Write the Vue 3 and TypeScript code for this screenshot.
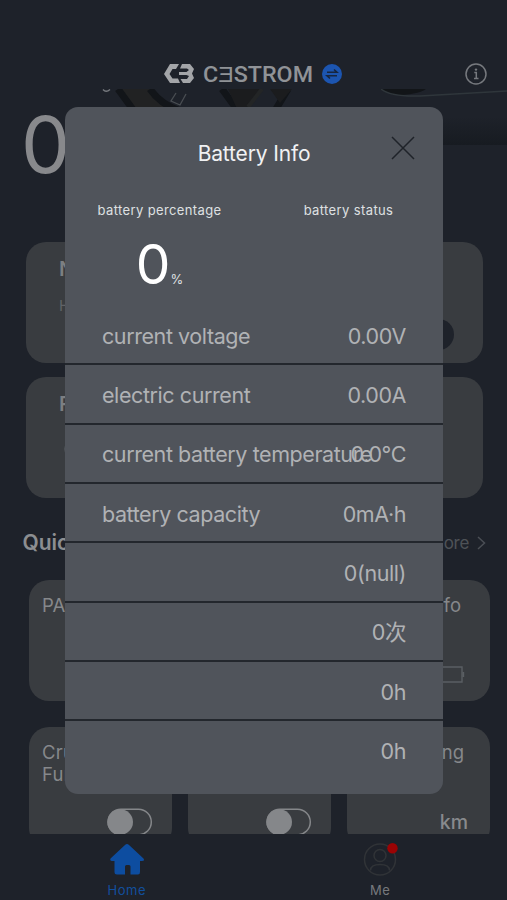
<script setup lang="ts">
interface Reading {
  label: string
  value: string
}

interface Tile {
  title: string
  kind: 'plain' | 'toggle' | 'battery' | 'distance'
}

const readings: Reading[] = [
  { label: 'current voltage', value: '0.00V' },
  { label: 'electric current', value: '0.00A' },
  { label: 'current battery temperature', value: '0.0°C' },
  { label: 'battery capacity', value: '0mA·h' },
  { label: '', value: '0(null)' },
  { label: '', value: '0次' },
  { label: '', value: '0h' },
  { label: '', value: '0h' },
]

const tiles: Tile[] = [
  { title: 'PAS', kind: 'plain' },
  { title: '', kind: 'plain' },
  { title: 'Info', kind: 'battery' },
  { title: 'Cruise Function', kind: 'toggle' },
  { title: '', kind: 'toggle' },
  { title: 'Riding', kind: 'distance' },
]
</script>

<template>
  <div class="screen">
    <header class="top">
      <svg class="mark" viewBox="0 0 30 20" width="30" height="20">
        <path d="M6 0H15L12 5H8.500L5.500 10L8.500 14.500H14L16 19H6L0 10Z" />
        <path d="M18 0H26L30 5L28 9.500L30 14L26 19H19L16.500 15H23L25 12L22.500 11H15V8H22.500L25 6L23 4.500H16Z" />
      </svg>
      <svg class="wordmark" viewBox="0 0 112 26" width="112" height="26">
        <text x="0" y="21" textLength="110" lengthAdjust="spacingAndGlyphs">CƎSTROM</text>
      </svg>
      <svg class="swap" viewBox="0 0 20 20" width="20" height="20">
        <circle cx="10" cy="10" r="10" fill="#1c55b0" />
        <path d="M5 8.300H15L12 5.500M15 11.700H5L8 14.500" fill="none" stroke="#17263f" stroke-width="1.600" />
      </svg>
      <svg class="about" viewBox="0 0 22 22" width="22" height="22">
        <circle cx="11" cy="11" r="10" fill="none" stroke="#76797e" stroke-width="1.500" />
        <circle cx="11" cy="6.600" r="1.200" fill="#76797e" />
        <path d="M9.300 9.500H11.300V15.500M9 15.500H13.500" fill="none" stroke="#76797e" stroke-width="1.500" />
      </svg>
    </header>

    <main class="content">
      <section class="hero">
        <svg class="bike" viewBox="0 0 507 80" width="507" height="80">
          <defs>
            <linearGradient id="ground" x1="0" y1="0" x2="0" y2="1">
              <stop offset="0" stop-color="#1e222a" />
              <stop offset="1" stop-color="#171b21" />
            </linearGradient>
          </defs>
          <rect x="440" y="28" width="67" height="28" fill="url(#ground)" />
          <path d="M118 0H152L178 22H134Z" fill="#212223" />
          <path d="M118 0L134 22M150 0Q160 15 180 22M222 0L238 22M288 0L276 20" fill="none" stroke="#121519" stroke-width="7" />
          <path d="M228 0H262L246 22H238Z M270 0H292L280 14Z" fill="#1b1c1e" />
          <path d="M262 0L248 18" stroke="#232526" stroke-width="4" />
          <path d="M176 4L171 12L180 16L186 5" fill="none" stroke="#4a4e53" stroke-width="1.300" />
          <path d="M380 0H426Q417 6 394 6Z" fill="#121518" />
          <path d="M381 0Q391 8 420 7L507 2" fill="none" stroke="#2f363b" stroke-width="1.500" />
          <path d="M103 .5Q106 4 110 .5" fill="none" stroke="#777a7f" stroke-width="1.400" />
        </svg>
        <span class="speed">0</span>
      </section>

      <section class="panel">
        <strong>N</strong>
        <small>H</small>
        <i class="knob"></i>
      </section>
      <section class="panel">
        <strong>R</strong>
        <svg class="dial" viewBox="0 0 20 20" width="20" height="20">
          <circle cx="10" cy="10" r="9" fill="none" stroke="#55595e" stroke-width="1.500" />
        </svg>
      </section>

      <div class="heading">
        <h2>Quick</h2>
        <span class="more">More
          <svg viewBox="0 0 9 14" width="9" height="14"><path d="M1 1L7.500 7L1 13" fill="none" stroke="#4b4f55" stroke-width="1.500" /></svg>
        </span>
      </div>

      <section class="tiles">
        <article v-for="(tile, i) in tiles" :key="i" class="tile" :class="tile.kind">
          <span class="title">{{ tile.title }}</span>
          <svg v-if="tile.kind === 'toggle'" class="toggle-icon" viewBox="0 0 46 28" width="46" height="28">
            <rect x="1" y="1.200" width="43.300" height="25.600" rx="12.800" fill="none" stroke="#85878a" stroke-width="1.500" />
            <circle cx="13.200" cy="14" r="12.800" fill="#85878a" />
          </svg>
          <svg v-else-if="tile.kind === 'battery'" class="cell" viewBox="0 0 36 17" width="36" height="17">
            <path d="M1 1H33V16H1ZM34.500 6V11" fill="none" stroke="#5a5e63" stroke-width="1.400" />
          </svg>
          <span v-else-if="tile.kind === 'distance'" class="unit">km</span>
        </article>
      </section>
    </main>

    <nav class="tabs">
      <a class="tab active">
        <svg viewBox="0 0 36 34" width="36" height="34">
          <path d="M18 1Q19 1 20 2L34.500 15.500Q36 18 33 18H31V29Q31 31.500 29 31.500H21.500V23.500Q21.500 22 20 22H17.500Q16 22 16 23.500V31.500H8Q5.500 31.500 5.500 29V18H3Q.5 17.500 1.500 15.500L16 2Q17 1 18 1Z" fill="#0d4da0" />
        </svg>
        <span>Home</span>
      </a>
      <a class="tab">
        <svg viewBox="0 0 36 34" width="36" height="34">
          <g fill="none" stroke="#303337" stroke-width="1.500">
            <circle cx="18" cy="16.500" r="15.500" />
            <circle cx="18" cy="12.500" r="6" />
            <path d="M8.500 27.500Q8.500 21.500 18 21.500T27.500 27.500" />
          </g>
          <circle cx="30.500" cy="5.200" r="5.200" fill="#9b0304" />
        </svg>
        <span>Me</span>
      </a>
    </nav>

    <div class="dialog">
      <div class="dialog-head">
        <h1>Battery Info</h1>
        <svg class="close" viewBox="0 0 24 24" width="24" height="24">
          <path d="M1 1L23 23M23 1L1 23" fill="none" stroke="#1f2329" stroke-width="1.500" />
        </svg>
      </div>
      <div class="summary">
        <div class="stat">
          <span class="caption">battery percentage</span>
          <p class="percent"><b>0</b><span>%</span></p>
        </div>
        <div class="stat">
          <span class="caption">battery status</span>
        </div>
      </div>
      <ul>
        <li v-for="(row, i) in readings" :key="i">
          <span class="name">{{ row.label }}</span>
          <span class="value">{{ row.value }}</span>
        </li>
      </ul>
    </div>
  </div>
</template>

<style>
body {
  background: #1e222a;
  overflow: hidden;
}
</style>

<style scoped>
.screen {
  position: relative;
  display: flex;
  flex-direction: column;
  width: 507px;
  height: 900px;
  overflow: hidden;
  background: #1e222a;
  color: #8b8d91;
  font-family: Inter, "Noto Sans CJK SC", sans-serif;
}
svg { display: block; flex: none; }
.top {
  display: flex;
  align-items: center;
  height: 89px;
  padding: 59px 20px 0 164px;
  box-sizing: border-box;
  flex: none;
}
.mark { fill: #a3a5a8; margin-right: 9px; }
.wordmark { fill: #909397; font: 500 22px Roboto, sans-serif; overflow: visible; }
.swap { margin-left: 7px; }
.about { margin-left: auto; }
.content { height: 745px; overflow: hidden; flex: none; }
.hero { height: 152.500px; position: relative; }
.bike { position: absolute; left: 0; top: 0; }
.speed {
  position: absolute;
  left: 21px;
  top: 8px;
  font-size: 78px;
  font-weight: 400;
  line-height: 95px;
  color: #88898c;
}
.panel {
  position: relative;
  width: 457px;
  height: 121px;
  box-sizing: border-box;
  margin: 0 0 14px 25.500px;
  padding: 15px 33.500px;
  border-radius: 20px;
  background: #393c40;
  display: flex;
  flex-direction: column;
}
.panel strong { font-size: 20px; line-height: 24px; font-weight: 600; color: #7c7f82; }
.panel small { margin-top: 15px; font-size: 15px; line-height: 20px; color: #606367; }
.dial { margin: 23px 0 0 5px; }
.knob {
  position: absolute;
  right: 29px;
  bottom: 13px;
  width: 31px;
  height: 31px;
  border-radius: 50%;
  background: #1e222a;
}
.heading {
  display: flex;
  align-items: center;
  justify-content: space-between;
  height: 62px;
  padding: 0 21px 0 22.500px;
}
.heading h2 { margin: 0; font-size: 21px; font-weight: 600; color: #8c8e91; }
.more { display: flex; align-items: center; gap: 8px; font-size: 17px; letter-spacing: -.3px; color: #4e5257; }
.heading + .tiles { margin-top: 6px; }
.tiles {
  display: grid;
  grid-template-columns: repeat(3, 143px);
  grid-auto-rows: 121px;
  gap: 26px 16px;
  padding-left: 29px;
}
.tile {
  box-sizing: border-box;
  padding: 14px 26px 0 13px;
  border-radius: 20px;
  background: #393c40;
  display: flex;
  flex-direction: column;
}
.title { font-size: 18.500px; line-height: 22.500px; min-height: 45px; color: #86888b; }
.battery .title, .distance .title { text-align: right; }
.battery .title { padding-right: 3px; }
.toggle .title { width: 84px; letter-spacing: .2px; }
.toggle-icon { margin: 22px 0 0 64.500px; }
.cell { margin: 27px -1px 0 auto; }
.unit { margin: 23px -4px 0 auto; font-size: 19.500px; line-height: 26px; font-weight: 500; color: #888a8d; }
.tabs {
  display: grid;
  grid-template-columns: 1fr 1fr;
  height: 66px;
  padding: 9px 0 0;
  box-sizing: border-box;
  flex: none;
}
.tab { display: flex; flex-direction: column; align-items: center; font-size: 13px; line-height: 16px; gap: 5px; color: #77797d; }
.tab.active { color: #124f9d; }
.tab span { letter-spacing: .5px; }
.dialog {
  position: absolute;
  left: 65px;
  top: 107px;
  width: 378px;
  height: 687px;
  border-radius: 13px;
  background: #50545b;
  overflow: hidden;
}
.dialog-head {
  display: grid;
  grid-template-columns: 54px 1fr 54px;
  align-items: start;
  height: 95px;
  padding-top: 29px;
  box-sizing: border-box;
}
.dialog-head h1 { grid-column: 2; margin: 5px 0 0; font-size: 21px; line-height: 26px; font-weight: 400; letter-spacing: -.15px; text-align: center; color: #f0f1f3; }
.close { margin-left: 1.500px; }
.summary { display: grid; grid-template-columns: 1fr 1fr; height: 104px; }
.stat { display: flex; flex-direction: column; align-items: center; }
.caption { font-size: 13px; line-height: 17px; letter-spacing: .38px; color: #dfe0e2; white-space: nowrap; }
.percent { display: flex; align-items: baseline; margin: 12px 0 0; color: #fff; }
.percent b { font-size: 55px; line-height: 66px; font-weight: 400; }
.percent span { font-size: 13px; color: #dfe0e2; }
ul { list-style: none; margin: 0; padding: 0; }
li {
  display: flex;
  justify-content: space-between;
  align-items: center;
  height: 59.350px;
  box-sizing: border-box;
  padding: 2px 37px 0;
  border-bottom: 2px solid #23272d;
  font-size: 21.500px;
  line-height: 26px;
  letter-spacing: -.42px;
  color: #b0b2b5;
}
li:last-child { border-bottom: 0; padding-bottom: 2px; }
.name { white-space: nowrap; width: 150px; }
.value { white-space: nowrap; }
</style>
